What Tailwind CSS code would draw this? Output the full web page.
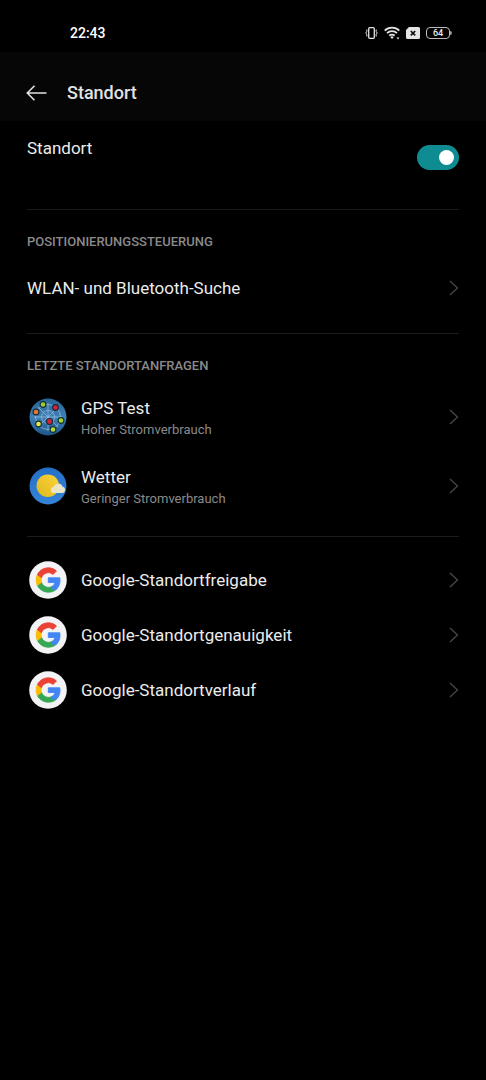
<!DOCTYPE html>
<html lang="de">
<head>
<meta charset="utf-8">
<meta name="viewport" content="width=device-width, initial-scale=1">
<title>Standort</title>
<script src="https://cdn.jsdelivr.net/npm/@tailwindcss/browser@4"></script>
</head>
<body class="min-h-screen bg-black font-['Roboto',sans-serif] text-[17px] leading-6 text-[#ececec]">
<svg class="hidden" aria-hidden="true">
  <symbol id="chevron" viewBox="0 0 10 16"><path d="M1 1l7.500 7L1 15" fill="none" stroke="#484848" stroke-width="1.300"/></symbol>
  <symbol id="google" viewBox="0 0 38 38">
    <circle cx="19" cy="19" r="18.800" fill="#f3f3f5"/>
    <g transform="translate(6 5.700) scale(1.110)" stroke-width=".8">
      <path fill="#34a853" stroke="#34a853" d="M12 23c2.970 0 5.460-.98 7.280-2.660l-3.570-2.770c-.98.66-2.230 1.060-3.710 1.060-2.860 0-5.290-1.930-6.160-4.530H2.180v2.840C3.990 20.530 7.700 23 12 23z"/>
      <path fill="#fbbc05" stroke="#fbbc05" d="M5.840 14.090c-.22-.66-.35-1.360-.35-2.090s.13-1.430.35-2.090V7.070H2.180C1.430 8.550 1 10.220 1 12s.43 3.450 1.180 4.930l3.660-2.840z"/>
      <path fill="#ea4335" stroke="#ea4335" d="M12 5.380c1.620 0 3.060.56 4.210 1.640l3.150-3.150C17.450 2.090 14.970 1 12 1 7.700 1 3.990 3.470 2.180 7.070l3.660 2.840c.87-2.600 3.300-4.530 6.160-4.530z"/>
      <path fill="#4285f4" stroke="#4285f4" d="M22.560 12.250c0-.78-.07-1.530-.2-2.250H12v4.260h5.920c-.26 1.370-1.040 2.530-2.210 3.310v2.770h3.570c2.080-1.920 3.280-4.740 3.280-8.090z"/>
    </g>
  </symbol>
</svg>

<div class="flex h-[52px] items-center justify-between pt-[14px] pr-[34px] pl-[70px]">
  <time class="text-sm font-medium text-white">22:43</time>
  <div class="flex items-center gap-[6px]">
    <svg class="h-3 w-[13px]" viewBox="0 0 13 12" fill="none" stroke="#e4e4e4" role="img" aria-label="Vibration"><rect x="3.700" y=".7" width="5.600" height="10.600" rx="1" stroke-width="1.300"/><path d="M1.800 2.500v2L.8 6l1 1.500v2M11.200 2.500v2l1 1.500-1 1.500v2"/></svg>
    <svg class="h-[14px] w-4" viewBox="0 0 16 14" fill="none" stroke="#e4e4e4" stroke-width="1.700" role="img" aria-label="WLAN"><path d="M.7 4.600a10.300 10.300 0 0 1 14.600 0M3 7.200a7 7 0 0 1 10 0M5.300 9.700a3.800 3.800 0 0 1 5.400 0"/><path d="M6.200 11l1.800 2 1.800-2a2.600 2.600 0 0 0-3.600 0zM12.500 11.500h3L14 13.500z" fill="#e4e4e4" stroke="none"/></svg>
    <svg class="h-3 w-[14px]" viewBox="0 0 14 12" role="img" aria-label="Keine SIM-Karte"><path d="M3 0h9.500A1.500 1.500 0 0 1 14 1.500v9a1.500 1.500 0 0 1-1.500 1.500h-11A1.500 1.500 0 0 1 0 10.500V3z" fill="#e4e4e4"/><path d="M4.800 4l4.400 4.400M9.200 4L4.800 8.400" stroke="#111" stroke-width="1.700"/></svg>
    <div class="flex items-center">
      <div class="flex h-3 w-6 items-center justify-center rounded-[4px] border border-[#bdbdbd] text-[9px] leading-none font-medium">64</div>
      <div class="h-1 w-[2px] rounded-r bg-[#999999]"></div>
    </div>
  </div>
</div>

<header class="flex h-[69px] items-center gap-5 bg-[#060606] px-[26px] pb-px pt-[14px]">
  <button type="button" aria-label="Zurück" class="shrink-0">
    <svg class="h-4 w-[21px]" viewBox="0 0 21 16" fill="none" stroke="#e2e2e2" stroke-width="1.600"><path d="M8.500.8L1.300 8l7.200 7.200M1.300 8H20.500"/></svg>
  </button>
  <h1 class="text-lg leading-6 font-medium text-[#e2e2e2]">Standort</h1>
</header>

<main class="px-[27px]">
  <section class="flex h-[89px] items-start justify-between border-b border-[#1c1c1c] pt-[15px]">
    <label for="location">Standort</label>
    <input id="location" type="checkbox" role="switch" checked class="relative mt-[9px] h-[25px] w-[42px] shrink-0 appearance-none rounded-full bg-[#333333] before:absolute before:top-[5px] before:left-[5px] before:size-[15px] before:rounded-full before:bg-white checked:bg-[#0f8c92] checked:before:left-[22px]">
  </section>

  <section class="border-b border-[#1c1c1c] pt-6 pb-5">
    <h2 class="text-[13px] leading-4 font-medium text-[#8a8a8a]">POSITIONIERUNGSSTEUERUNG</h2>
    <a href="#scan" class="mt-[13px] flex h-[50px] items-center justify-between">WLAN- und Bluetooth-Suche<svg class="h-4 w-[10px]"><use href="#chevron"/></svg></a>
  </section>

  <section class="border-b border-[#1c1c1c] pt-6 pb-4">
    <h2 class="mb-2 text-[13px] leading-4 font-medium text-[#8a8a8a]">LETZTE STANDORTANFRAGEN</h2>
    <a href="#gps" class="flex h-[69px] items-center">
      <svg class="mr-[14px] ml-[2px] size-[38px]" viewBox="0 0 38 38" aria-hidden="true">
        <defs><linearGradient id="globe" x1="0" y1="0" x2="0" y2="1"><stop stop-color="#286596"/><stop offset=".5" stop-color="#3f80b5"/><stop offset="1" stop-color="#1c568b"/></linearGradient></defs>
        <circle cx="19" cy="19" r="18.500" fill="url(#globe)"/>
        <g fill="none" stroke="#a5c9e4" stroke-width=".8" opacity=".8"><circle cx="19" cy="19" r="12.500"/><circle cx="19" cy="19" r="6.500"/><path d="M5 19h28M19 5v28M9 9l20 20M29 9L9 29"/></g>
        <g stroke="#142d38" stroke-width="1.100"><circle cx="14" cy="6.500" r="2.900" fill="#9bcb2c"/><circle cx="26.500" cy="9.500" r="2.900" fill="#d4213c"/><circle cx="7" cy="14" r="2.900" fill="#ee7430"/><circle cx="20.500" cy="23.500" r="3" fill="#d4213c"/><circle cx="32" cy="22.500" r="2.900" fill="#a5d52d"/><circle cx="9.500" cy="26" r="2.900" fill="#e4e64b"/><circle cx="24" cy="31.500" r="2.900" fill="#b5dc35"/></g>
      </svg>
      <div class="flex-1 pt-px"><div>GPS Test</div><div class="text-[13px] leading-[19px] text-[#8a8a8a]">Hoher Stromverbrauch</div></div>
      <svg class="h-4 w-[10px]"><use href="#chevron"/></svg>
    </a>
    <a href="#weather" class="flex h-[69px] items-center">
      <svg class="mr-[14px] ml-[2px] size-[38px]" viewBox="0 0 38 38" aria-hidden="true">
        <defs><linearGradient id="sky" x1="0" y1="0" x2="0" y2="1"><stop stop-color="#246fc8"/><stop offset="1" stop-color="#3584d6"/></linearGradient><linearGradient id="sun" x1="1" y1="0" x2="0" y2="1"><stop stop-color="#fbd43d"/><stop offset=".5" stop-color="#eec52b"/><stop offset="1" stop-color="#d9ba24"/></linearGradient></defs>
        <circle cx="19" cy="19" r="18.500" fill="url(#sky)"/><circle cx="18.800" cy="18.700" r="11.300" fill="url(#sun)"/>
        <path d="M25 26a3 3 0 0 1-.3-6 4.600 4.600 0 0 1 8.700-.5 3.300 3.300 0 0 1-.3 6.500z" fill="#e9e5c6"/>
      </svg>
      <div class="flex-1 pt-px"><div>Wetter</div><div class="text-[13px] leading-[19px] text-[#8a8a8a]">Geringer Stromverbrauch</div></div>
      <svg class="h-4 w-[10px]"><use href="#chevron"/></svg>
    </a>
  </section>

  <nav class="pt-[15px]">
    <a href="#sharing" class="flex h-[55px] items-center"><svg class="mr-[14px] ml-[2px] size-[38px]"><use href="#google"/></svg><span class="flex-1">Google-Standortfreigabe</span><svg class="h-4 w-[10px]"><use href="#chevron"/></svg></a>
    <a href="#accuracy" class="flex h-[55px] items-center"><svg class="mr-[14px] ml-[2px] size-[38px]"><use href="#google"/></svg><span class="flex-1">Google-Standortgenauigkeit</span><svg class="h-4 w-[10px]"><use href="#chevron"/></svg></a>
    <a href="#history" class="flex h-[55px] items-center"><svg class="mr-[14px] ml-[2px] size-[38px]"><use href="#google"/></svg><span class="flex-1">Google-Standortverlauf</span><svg class="h-4 w-[10px]"><use href="#chevron"/></svg></a>
  </nav>
</main>
</body>
</html>
